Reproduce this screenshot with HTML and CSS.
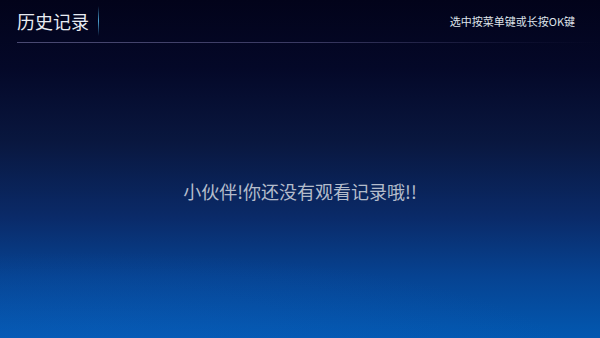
FILE: index.html
```html
<!DOCTYPE html>
<html lang="zh">
<head>
<meta charset="utf-8">
<link rel="stylesheet" href="styles.css">
</head>
<body>
<div class="screen">
  <header class="topbar">
    <div class="title-wrap">
      <h1 class="title">历史记录</h1>
      <span class="divider"></span>
    </div>
    <div class="hint">选中按菜单键或长按OK键</div>
  </header>
  <div class="rule"></div>
  <main class="empty">
    <p class="empty-text">小伙伴!你还没有观看记录哦!!</p>
  </main>
</div>
</body>
</html>
```
FILE: styles.css
```css
html, body {
  margin: 0;
  padding: 0;
  width: 600px;
  height: 338px;
  overflow: hidden;
}
body {
  font-family: "Noto Sans CJK SC", "Noto Sans", sans-serif;
}
.screen {
  width: 600px;
  height: 338px;
  display: flex;
  flex-direction: column;
  background:
    radial-gradient(ellipse 500px 120px at 15% 110%, rgba(20, 100, 200, 0.35), rgba(20, 100, 200, 0) 100%),
    linear-gradient(180deg, #02031a 0%, #040828 20%, #09173f 42%, #0a2a68 64%, #064392 82%, #0258b0 100%);
}
.topbar {
  display: flex;
  align-items: center;
  justify-content: space-between;
  height: 42px;
  padding: 0 25px 0 17px;
}
.title-wrap {
  display: flex;
  align-items: center;
  gap: 9px;
}
.title {
  margin: 0;
  font-size: 18px;
  font-weight: 400;
  color: #e8ebf2;
  line-height: 24px;
}
.divider {
  width: 1px;
  height: 30px;
  background: linear-gradient(180deg, rgba(60,150,200,0) 0%, #4aa0d0 50%, rgba(60,150,200,0) 100%);
}
.hint {
  font-size: 11px;
  color: #dfe3ea;
  line-height: 16px;
}
.rule {
  height: 1px;
  margin-left: 17px;
  background: linear-gradient(90deg, #4a4a72 0%, #3a3a62 50%, rgba(40,40,80,0.3) 85%, rgba(40,40,80,0) 100%);
}
.empty {
  flex: 1;
  display: flex;
  justify-content: center;
  padding-top: 136px;
}
.empty-text {
  margin: 0;
  font-size: 18px;
  color: #b4bccb;
  line-height: 24px;
}
```
